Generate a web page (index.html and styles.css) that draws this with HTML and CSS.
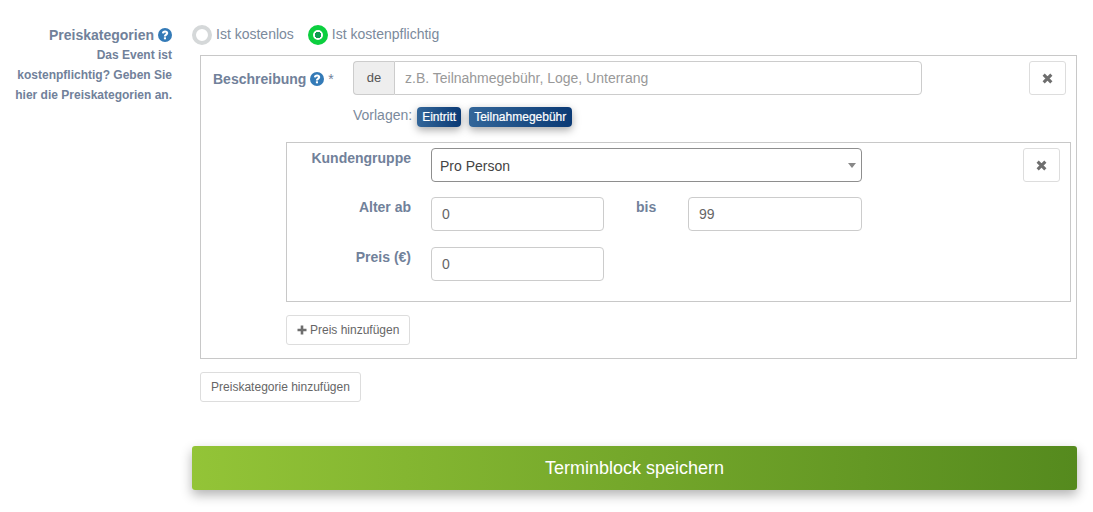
FILE: index.html
```html
<!DOCTYPE html>
<html lang="de">

<head>
    <meta charset="utf-8" />
    <title>Terminblock</title>
    <link rel="stylesheet" href="styles.css">
</head>
<body>
    <form class="event-form">
        <!-- Preiskategorien start -->
        <section class="price-row">
            <div class="side-label">
                <div class="side-title">Preiskategorien
                    <svg class="help-icon" viewBox="0 0 14 14"><circle cx="7" cy="7" r="7" fill="#337ab7"/><path d="M3.900 5.300C4 3.500 5.300 2.500 7.100 2.500c1.800 0 3.100 1 3.100 2.600 0 1.200-.7 1.800-1.400 2.300-.6.400-.8.600-.8 1.200H5.900c0-1.200.4-1.800 1.200-2.400.6-.4.9-.7.9-1.100 0-.4-.3-.7-.9-.7s-1 .3-1.100 1z" fill="#fff"/><rect x="5.900" y="9.300" width="2.100" height="2" fill="#fff"/></svg>
                </div>
                <p class="side-text">Das Event ist kostenpflichtig? Geben Sie hier die Preiskategorien an.</p>
            </div>
            <div class="price-content">
                <div class="radio-row">
                    <label class="radio-item"><span class="radio-dot"></span>Ist kostenlos</label>
                    <label class="radio-item"><span class="radio-dot radio-active"></span>Ist kostenpflichtig</label>
                </div>
                <div class="category-box">
                    <div class="category-head">
                        <div class="desc-label">Beschreibung
                            <svg class="help-icon" viewBox="0 0 14 14"><circle cx="7" cy="7" r="7" fill="#337ab7"/><path d="M3.900 5.300C4 3.500 5.300 2.500 7.100 2.500c1.800 0 3.100 1 3.100 2.600 0 1.200-.7 1.800-1.400 2.300-.6.400-.8.600-.8 1.200H5.900c0-1.200.4-1.800 1.200-2.400.6-.4.9-.7.9-1.100 0-.4-.3-.7-.9-.7s-1 .3-1.100 1z" fill="#fff"/><rect x="5.900" y="9.300" width="2.100" height="2" fill="#fff"/></svg>
                            <span class="star">*</span>
                        </div>
                        <div class="input-group">
                            <span class="input-addon">de</span>
                            <input class="group-input" type="text" placeholder="z.B. Teilnahmegebühr, Loge, Unterrang" />
                        </div>
                        <button class="btn-remove" type="button">
                            <svg class="x-icon" viewBox="0 0 10 10"><path d="M1.500 1.500l7 7M8.500 1.500l-7 7" stroke="#6e6e6e" stroke-width="2.800"/></svg>
                        </button>
                    </div>
                    <div class="template-row">
                        <span class="template-label">Vorlagen:</span>
                        <span class="template-tag">Eintritt</span>
                        <span class="template-tag">Teilnahmegebühr</span>
                    </div>
                    <div class="price-box">
                        <div class="price-line price-line-group">
                            <label class="field-label">Kundengruppe</label>
                            <div class="select-box">Pro Person<span class="select-arrow"></span></div>
                            <button class="btn-remove btn-remove-inner" type="button">
                                <svg class="x-icon" viewBox="0 0 10 10"><path d="M1.500 1.500l7 7M8.500 1.500l-7 7" stroke="#6e6e6e" stroke-width="2.800"/></svg>
                            </button>
                        </div>
                        <div class="price-line">
                            <label class="field-label">Alter ab</label>
                            <input class="num-input" type="text" value="0" />
                            <label class="field-label field-label-bis">bis</label>
                            <input class="num-input num-input-wide" type="text" value="99" />
                        </div>
                        <div class="price-line">
                            <label class="field-label">Preis (€)</label>
                            <input class="num-input" type="text" value="0" />
                        </div>
                    </div>
                    <button class="btn-small btn-add-price" type="button">
                        <svg class="plus-icon" viewBox="0 0 10 10"><path d="M5 .5v9M.5 5h9" stroke="#6e6e6e" stroke-width="2.600"/></svg>
                        Preis hinzufügen
                    </button>
                </div>
                <button class="btn-small btn-add-category" type="button">Preiskategorie hinzufügen</button>
                <button class="btn-save" type="button">Terminblock speichern</button>
            </div>
        </section>
        <!-- Preiskategorien end -->
    </form>
</body>

</html>
```

FILE: styles.css
```css
* {
    box-sizing: border-box;
    margin: 0;
    padding: 0;
}

body {
    background-color: #fff;
    font-family: "Liberation Sans", Arial, sans-serif;
    font-size: 14px;
    color: #555;
}

.event-form {
    width: 1077px;
    padding: 25px 0 22px;
}

.price-row {
    display: grid;
    grid-template-columns: 172px 885px;
    column-gap: 20px;
}

.side-label {
    padding-left: 10px;
    text-align: right;
    color: #71819a;
    font-weight: 700;
}

.side-title {
    display: flex;
    justify-content: flex-end;
    align-items: center;
    gap: 4px;
    height: 20px;
    font-size: 14px;
}

.help-icon {
    width: 14px;
    height: 14px;
    flex: none;
}

.side-text {
    font-size: 12px;
    line-height: 20px;
}

.radio-row {
    display: flex;
    gap: 14px;
    height: 20px;
    margin-bottom: 10px;
}

.radio-item {
    display: flex;
    align-items: center;
    gap: 4px;
    height: 20px;
    color: #7b8a9c;
    font-size: 14px;
    line-height: 18px;
}

.radio-item {
    align-items: flex-start;
}

.radio-dot {
    width: 20px;
    height: 20px;
    border-radius: 50%;
    border: 4px solid #d5d8d9;
    background-color: #fff;
}

.radio-active {
    border: 5px solid #0ccf3f;
    background: radial-gradient(circle, #0c9c50 0 3px, #fff 3.500px);
}

.category-box {
    margin-left: 8px;
    border: 1px solid #c8c8c8;
    height: 304px;
    padding: 5px;
}

.category-head {
    display: flex;
    align-items: flex-start;
}

.desc-label {
    display: flex;
    align-items: center;
    gap: 4px;
    width: 147px;
    height: 36px;
    padding: 0 0 0 7px;
    font-weight: 700;
    color: #71819a;
}

.star {
    font-weight: 400;
}

.input-group {
    display: flex;
    width: 569px;
    height: 34px;
}

.input-addon {
    width: 41px;
    background-color: #eee;
    border: 1px solid #ccc;
    border-right: 0;
    border-radius: 4px 0 0 4px;
    text-align: center;
    line-height: 31px;
    font-size: 13px;
    color: #555;
}

.group-input {
    flex: 1;
    border: 1px solid #ccc;
    border-radius: 0 4px 4px 0;
    padding: 0 10px;
    font: inherit;
    outline: none;
}

.group-input::placeholder {
    color: #999;
}

.btn-remove {
    width: 37px;
    height: 34px;
    margin-left: auto;
    margin-right: 5px;
    background-color: #fff;
    border: 1px solid #ddd;
    border-radius: 3px;
    display: flex;
    align-items: center;
    justify-content: center;
}

.btn-remove-inner {
    margin-right: 10px;
}

.x-icon {
    width: 11px;
    height: 11px;
}

.template-row {
    display: flex;
    align-items: center;
    gap: 8px;
    height: 20px;
    margin: 10px 0 15px 147px;
}

.template-label {
    font-size: 14px;
    color: #7b8a9c;
    margin-top: -5px;
    margin-right: -3px;
}

.template-tag {
    background: linear-gradient(to right, #336699, #0b3a75);
    color: #fff;
    font-size: 12px;
    line-height: 20px;
    padding: 0 5px;
    border-radius: 4px;
    box-shadow: 0 3px 8px rgba(0, 0, 0, 0.35);
    -webkit-text-stroke: 0.2px #fff;
}

.template-tag:last-child {
    padding-right: 6px;
}

.price-box {
    margin-left: 80px;
    width: 785px;
    height: 160px;
    border: 1px solid #c8c8c8;
    padding-top: 5px;
}

.price-line {
    display: flex;
    align-items: flex-start;
    margin-bottom: 16px;
}

.price-line-group {
    margin-bottom: 15px;
}

.field-label {
    width: 124px;
    text-align: right;
    font-weight: 700;
    color: #71819a;
    margin-right: 20px;
    line-height: 20px;
}

.field-label-bis {
    width: 20px;
    margin: 0 32px;
    text-align: left;
}

.select-box {
    position: relative;
    width: 431px;
    height: 34px;
    border: 1px solid #8e8e8e;
    border-radius: 4px;
    padding-left: 8px;
    line-height: 34px;
    color: #444;
}

.select-arrow {
    position: absolute;
    right: 5px;
    top: 14px;
    border-left: 4px solid transparent;
    border-right: 4px solid transparent;
    border-top: 5px solid #888;
}

.num-input {
    width: 173px;
    height: 34px;
    border: 1px solid #ccc;
    border-radius: 4px;
    padding: 0 10px;
    font: inherit;
    color: #666;
    outline: none;
}

.num-input-wide {
    width: 174px;
}

.btn-small {
    display: block;
    height: 30px;
    background-color: #fff;
    border: 1px solid #ddd;
    border-radius: 3px;
    font-family: inherit;
    font-size: 12px;
    color: #666;
}

.btn-add-price {
    display: flex;
    align-items: center;
    gap: 3px;
    margin: 13px 0 0 80px;
    width: 124px;
    padding-left: 10px;
}

.plus-icon {
    width: 10px;
    height: 10px;
}

.btn-add-category {
    width: 161px;
    margin: 13px 0 0 8px;
}

.btn-save {
    display: block;
    width: 885px;
    height: 44px;
    margin-top: 44px;
    border: 0;
    border-radius: 3px;
    background: linear-gradient(to right, #93c437, #558a1e);
    color: #fff;
    font-family: inherit;
    font-size: 18px;
    box-shadow: 0 5px 12px rgba(0, 0, 0, 0.3);
}
```
